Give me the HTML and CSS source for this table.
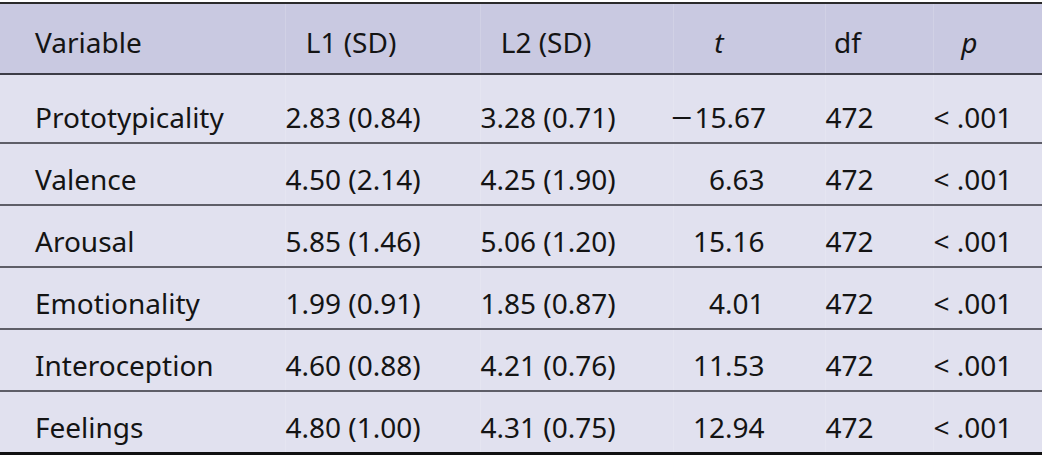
FILE: index.html
```html
<!DOCTYPE html>
<html>
<head>
<meta charset="utf-8">
<link rel="stylesheet" href="styles.css">
</head>
<body>
<table class="stats">
  <colgroup>
    <col class="c-var"><col class="c-l1"><col class="c-l2"><col class="c-t"><col class="c-df"><col class="c-p">
  </colgroup>
  <thead>
    <tr>
      <th class="var">Variable</th>
      <th class="l1">L1 (SD)</th>
      <th class="l2">L2 (SD)</th>
      <th class="t"><i>t</i></th>
      <th class="df">df</th>
      <th class="p"><i>p</i></th>
    </tr>
  </thead>
  <tbody>
    <tr class="first">
      <td class="var">Prototypicality</td><td class="l1">2.83 (0.84)</td><td class="l2">3.28 (0.71)</td><td class="t"><span class="minus">−</span>15.67</td><td class="df">472</td><td class="p">&lt; .001</td>
    </tr>
    <tr>
      <td class="var">Valence</td><td class="l1">4.50 (2.14)</td><td class="l2">4.25 (1.90)</td><td class="t">6.63</td><td class="df">472</td><td class="p">&lt; .001</td>
    </tr>
    <tr>
      <td class="var">Arousal</td><td class="l1">5.85 (1.46)</td><td class="l2">5.06 (1.20)</td><td class="t">15.16</td><td class="df">472</td><td class="p">&lt; .001</td>
    </tr>
    <tr>
      <td class="var">Emotionality</td><td class="l1">1.99 (0.91)</td><td class="l2">1.85 (0.87)</td><td class="t">4.01</td><td class="df">472</td><td class="p">&lt; .001</td>
    </tr>
    <tr>
      <td class="var">Interoception</td><td class="l1">4.60 (0.88)</td><td class="l2">4.21 (0.76)</td><td class="t">11.53</td><td class="df">472</td><td class="p">&lt; .001</td>
    </tr>
    <tr class="last">
      <td class="var">Feelings</td><td class="l1">4.80 (1.00)</td><td class="l2">4.31 (0.75)</td><td class="t">12.94</td><td class="df">472</td><td class="p">&lt; .001</td>
    </tr>
  </tbody>
</table>
</body>
</html>
```
FILE: styles.css
```css
html, body {
  margin: 0;
  padding: 0;
  background: #ffffff;
}
body {
  padding-top: 2px;
}
.stats {
  width: 1042px;
  table-layout: fixed;
  border-collapse: collapse;
  font-family: "Noto Sans", "Open Sans", sans-serif;
  font-size: 28px;
  color: #141414;
  border-top: 2px solid #2a2a2a;
  border-bottom: 3px solid #111111;
}
.c-var { width: 285px; }
.c-l1 { width: 195px; }
.c-l2 { width: 193px; }
.c-t { width: 152px; }
.c-df { width: 108px; }
.c-p { width: 109px; }

.stats th, .stats td {
  padding: 0;
  white-space: nowrap;
  vertical-align: middle;
  font-weight: normal;
  line-height: 36px;
  border-left: 1px solid rgba(255, 255, 255, 0.16);
}
.stats th.var, .stats td.var { border-left: none; }

.stats thead tr {
  background: #c9c9e1;
  height: 71px;
  border-bottom: 2px solid #3c3c46;
}
.stats thead th { padding-top: 6px; }

.stats tbody tr {
  background: #e1e1ef;
  height: 62px;
  border-bottom: 2px solid #5e5e68;
}
.stats tbody td { padding-top: 10px; }
.stats tbody tr.first { height: 69px; }
.stats tbody tr.first td { padding-top: 16px; }
.stats tbody tr.last { border-bottom: none; height: 62px; }

.var { text-align: left; padding-left: 35px !important; }
.l1 { text-align: center; padding-right: 63px !important; }
.l2 { text-align: center; padding-right: 61px !important; }
.t { padding-right: 60px !important; }
th.t { text-align: center; }
td.t { text-align: right; }
.df { text-align: center; padding-right: 63px !important; }
.p { text-align: center; padding-right: 37px !important; }
.stats i { font-style: italic; }
.minus { display: inline-block; transform: scaleX(1.35); margin-right: 5px; }
```
